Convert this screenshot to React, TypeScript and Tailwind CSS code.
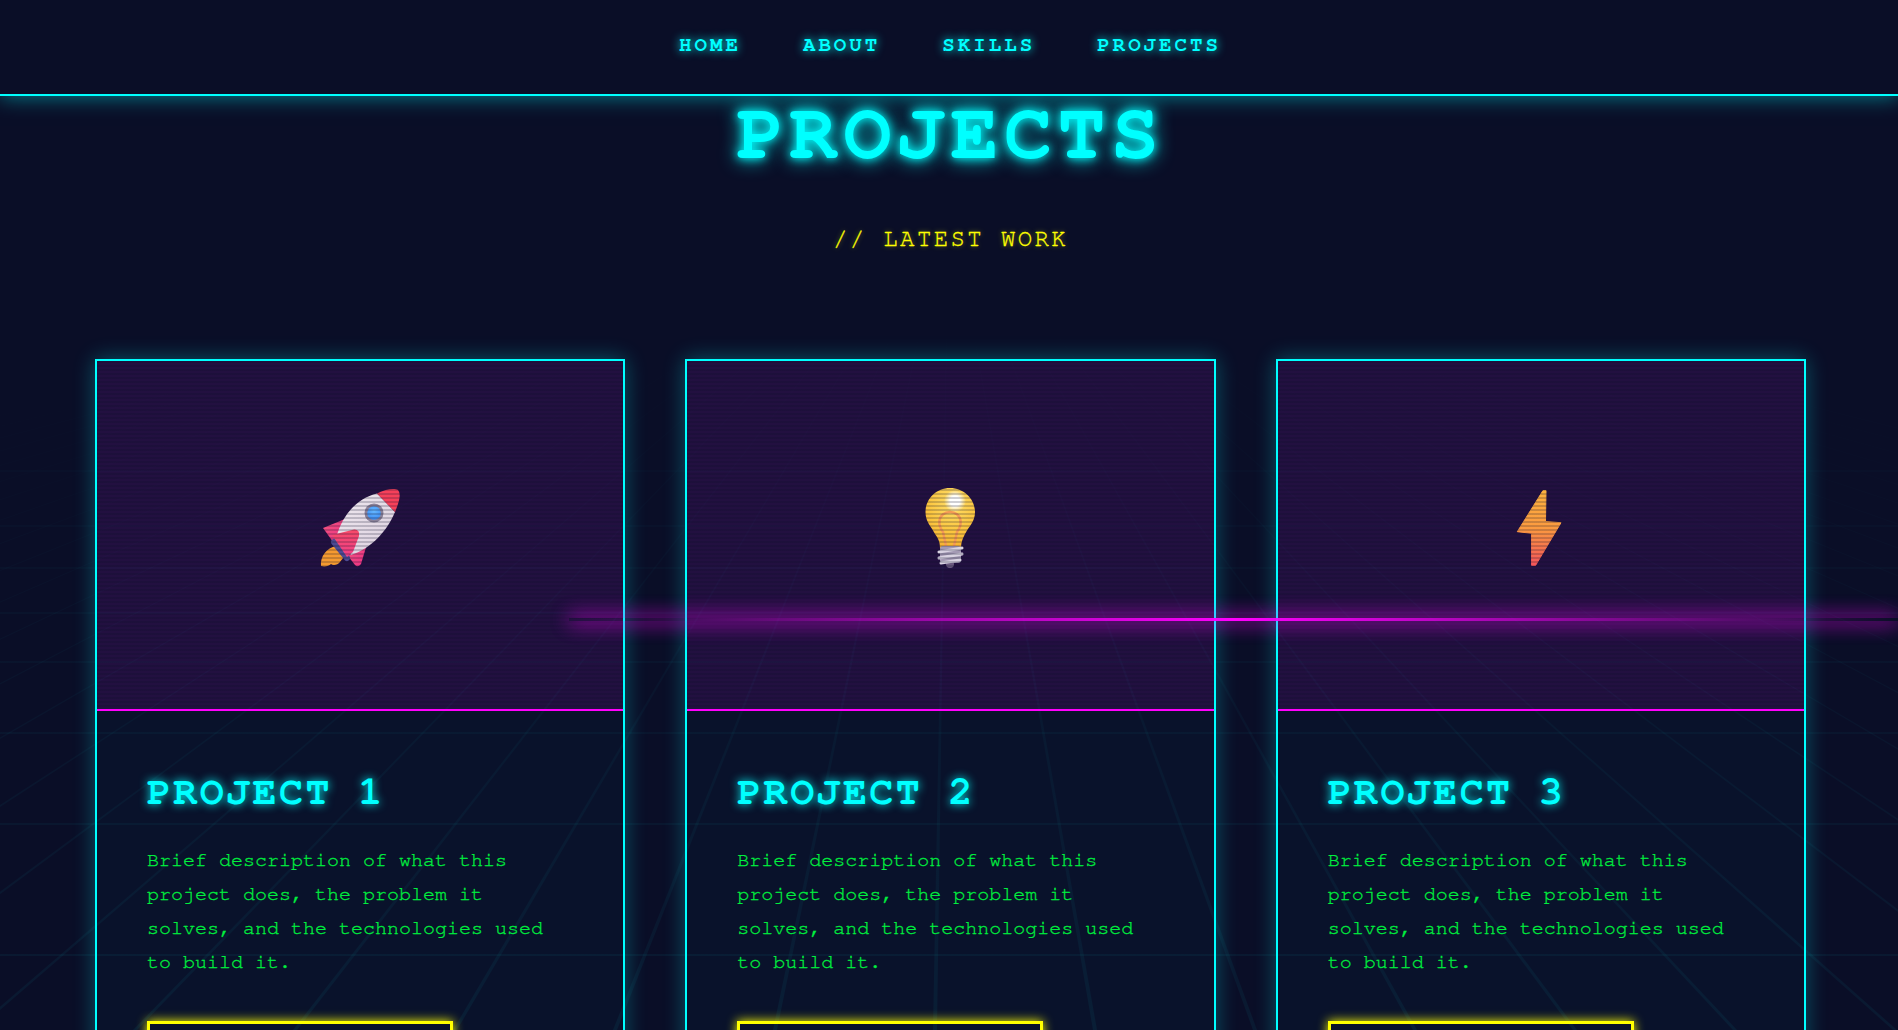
import React from "react";

const VP = { x: 949, y: 190 };
const rows = [954, 823, 732, 661, 612, 567, 525, 470];
const rays = Array.from({ length: 61 }, (_, i) => 935 + 160 * (i - 30));

function Rocket() {
  return (
    <svg width="80" height="80" viewBox="0 0 80 80">
      <defs>
        <linearGradient id="rb" x1="0" y1="0" x2="1" y2="1">
          <stop offset="0" stopColor="#efe9ef" />
          <stop offset="1" stopColor="#dccfdf" />
        </linearGradient>
        <linearGradient id="rp" x1="0" y1="0" x2="1" y2="1">
          <stop offset="0" stopColor="#f2557e" />
          <stop offset="1" stopColor="#ee2f86" />
        </linearGradient>
        <linearGradient id="rr" x1="0" y1="0" x2="0" y2="1">
          <stop offset="0" stopColor="#f74a68" />
          <stop offset="1" stopColor="#f0408a" />
        </linearGradient>
        <radialGradient id="rw" cx="0.5" cy="0.35" r="0.7">
          <stop offset="0" stopColor="#66b8ff" />
          <stop offset="1" stopColor="#3d8df5" />
        </radialGradient>
      </defs>
      <path d="M16 58C7 60 0 68 1 78C5 79 9 78 11 76C13 78 18 77 20 74C22 71 24 70 24 67Z" fill="#f59a30" />
      <path d="M3 40L25 31L16 58Z" fill="url(#rp)" />
      <path d="M28 68L47 56L41 76Q38 80 35 77Z" fill="url(#rp)" />
      <path d="M14 54L27 70" stroke="#4d4a92" strokeWidth="6" strokeLinecap="round" />
      <path d="M57 5.5C38 10 23 25 16 50L31 67C52 60 67 43 75 24Z" fill="url(#rb)" />
      <path d="M57 5.5C66 1 74 0 78 2C81 6 80 12 75 24Z" fill="#f5405a" />
      <circle cx="54" cy="25" r="9.5" fill="#8a8199" />
      <circle cx="54" cy="25" r="6.8" fill="url(#rw)" />
      <path d="M12 47L34 41.5Q40 41 39 48L33 64L27 69Z" fill="url(#rr)" />
    </svg>
  );
}

function Bulb() {
  return (
    <svg width="80" height="80" viewBox="0 0 80 80">
      <defs>
        <radialGradient id="bg" cx="0.55" cy="0.25" r="0.8">
          <stop offset="0" stopColor="#ffdf6b" />
          <stop offset="0.6" stopColor="#fcc640" />
          <stop offset="1" stopColor="#f5ad2e" />
        </radialGradient>
        <radialGradient id="bh" cx="0.5" cy="0.5" r="0.5">
          <stop offset="0.45" stopColor="#ffffff" />
          <stop offset="1" stopColor="#ffffff" stopOpacity="0" />
        </radialGradient>
      </defs>
      <path d="M40 0C54 0 65 11 65 24C65 34 59 38 55 46C53 50 51 54 51 60L30 60C30 54 28 50 25 46C21 38 15.5 34 15.5 24C15.5 11 26 0 40 0Z" fill="url(#bg)" />
      <ellipse cx="45" cy="13" rx="11" ry="11" fill="url(#bh)" />
      <path d="M36 58L33 44C30 40 29 36 29.5 33C30 27 35 24 40 24C45 24 50 27 50.5 33C51 36 50 40 47 44L44 58" fill="none" stroke="#f59a55" strokeWidth="2.5" />
      <circle cx="40" cy="76" r="4" fill="#6b5a80" />
      <rect x="30" y="58" width="21" height="17" rx="3" fill="#a49ab4" />
      <path d="M29 64L52 60M29 70L52 66M31 75L50 72" stroke="#d9d3e2" strokeWidth="3" strokeLinecap="round" />
    </svg>
  );
}

function Bolt() {
  return (
    <svg width="80" height="80" viewBox="0 0 80 80">
      <defs>
        <linearGradient id="zg" x1="0" y1="0" x2="0" y2="1">
          <stop offset="0" stopColor="#fdb23f" />
          <stop offset="0.5" stopColor="#fb9a40" />
          <stop offset="1" stopColor="#f4555a" />
        </linearGradient>
      </defs>
      <path d="M42 2.5L45 2.5L44.5 33.5L60 34.7L34.5 77.5L30.6 77.5L30.6 45.3L16.3 43.7Z" fill="url(#zg)" stroke="url(#zg)" strokeWidth="1" strokeLinejoin="round" />
    </svg>
  );
}

const projects = [
  { name: "PROJECT 1", icon: <Rocket /> },
  { name: "PROJECT 2", icon: <Bulb /> },
  { name: "PROJECT 3", icon: <Bolt /> },
];

function Card({ name, icon }: { name: string; icon: React.ReactNode }) {
  return (
    <article className="border-2 border-[#00ffff] bg-[rgba(0,255,255,0.02)] shadow-[0_0_20px_rgba(0,255,255,0.3)]">
      <div className="relative flex h-[350px] items-center justify-center border-b-2 border-[#ff00ff] bg-[rgba(255,0,255,0.1)]">
        <div className="mb-[14px]">{icon}</div>
        <div className="absolute inset-0 bg-[repeating-linear-gradient(0deg,transparent,transparent_2px,rgba(10,14,39,0.2)_2px,rgba(10,14,39,0.2)_4px)]" />
      </div>
      <div className="p-[50px] pt-[58px]">
        <h3 className="text-[40px] font-bold leading-[46px] tracking-[2.4px] text-[#00ffff] [text-shadow:0_0_10px_#00ffff]">{name}</h3>
        <p className="mt-[28px] text-[20px] leading-[34px] text-[#00f03e] [-webkit-text-stroke:0.3px_#00f03e]">
          Brief description of what this project does, the problem it solves, and the technologies used to build it.
        </p>
        <button className="mt-[42px] block h-[60px] w-[306px] border-[3px] border-[#ffff00] shadow-[0_0_10px_#ffff00]" aria-label="View project" />
      </div>
    </article>
  );
}

export default function App() {
  return (
    <div className="relative h-[1030px] overflow-hidden bg-[#0a0e27] font-['FreeMono','Liberation_Mono',monospace]">
      <svg className="absolute inset-0" width="1898" height="1030" aria-hidden="true">
        <defs>
          <linearGradient id="fade" gradientUnits="userSpaceOnUse" x1="0" y1="300" x2="0" y2="1030">
            <stop offset="0" stopColor="#00ffff" stopOpacity="0" />
            <stop offset="0.45" stopColor="#00ffff" stopOpacity="0.025" />
            <stop offset="1" stopColor="#00ffff" stopOpacity="0.05" />
          </linearGradient>
        </defs>
        {rows.map((y) => (
          <rect key={y} x="0" y={y} width="1898" height="2" fill="url(#fade)" />
        ))}
        {rays.map((x) => (
          <polygon
            key={x}
            points={`${VP.x},${VP.y} ${x - 2},1030 ${x + 2},1030`}
            fill="url(#fade)"
          />
        ))}
      </svg>

      <nav className="relative z-10 flex h-[96px] items-center justify-center gap-[62px] border-b-2 border-[#00ffff] bg-[#0a0e27] pb-[4px] pl-[2px] text-[20.8px] font-bold tracking-[3px] text-[#00ffff] shadow-[0_0_20px_rgba(0,255,255,0.5)] [text-shadow:0_0_10px_#00ffff]">
        <a>HOME</a>
        <a>ABOUT</a>
        <a>SKILLS</a>
        <a>PROJECTS</a>
      </nav>

      <main className="relative pl-[95px] pr-[92px]">
        <h1 className="mt-[-7px] text-center text-[80px] font-bold leading-[90px] tracking-[5.5px] text-[#00ffff] [text-shadow:0_0_10px_#00ffff,0_0_20px_#00ffff]">
          PROJECTS
        </h1>
        <p className="mt-[46px] text-center text-[24px] leading-[28px] tracking-[2.4px] text-[#ffff00] [-webkit-text-stroke:0.3px_#ffff00] [text-shadow:0_0_5px_rgba(255,255,0,0.5)]">
          // LATEST WORK
        </p>
        <div className="mt-[106px] grid grid-cols-3 gap-[60px]">
          {projects.map((p) => (
            <Card key={p.name} name={p.name} icon={p.icon} />
          ))}
        </div>
      </main>

      <div className="absolute left-[30%] top-[618px] z-20 h-[3px] w-[70%] bg-[linear-gradient(90deg,transparent,#ff00ff,transparent)] shadow-[0_0_20px_#ff00ff,0_0_20px_#ff00ff]" />
    </div>
  );
}
